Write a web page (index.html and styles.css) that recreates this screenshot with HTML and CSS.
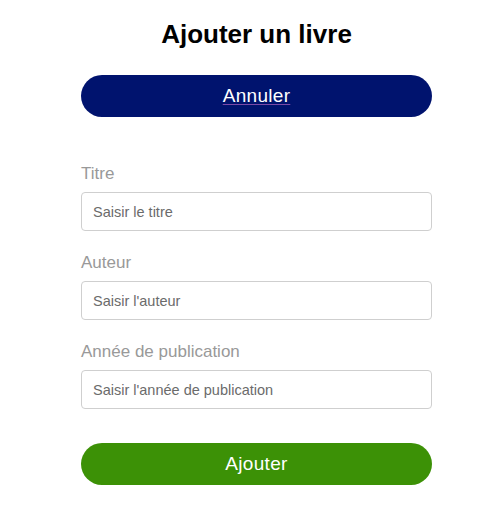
FILE: index.html
```html
<!DOCTYPE html>
<html lang="fr">
<head>
<meta charset="utf-8">
<title>Ajouter un livre</title>
<link rel="stylesheet" href="styles.css">
</head>
<body>
<main class="page">
  <h1 class="title">Ajouter un livre</h1>
  <a class="btn btn-cancel" href="#">Annuler</a>
  <form class="form">
    <div class="field">
      <label class="label" for="titre">Titre</label>
      <input class="input" id="titre" type="text" placeholder="Saisir le titre">
    </div>
    <div class="field">
      <label class="label" for="auteur">Auteur</label>
      <input class="input" id="auteur" type="text" placeholder="Saisir l'auteur">
    </div>
    <div class="field">
      <label class="label" for="annee">Année de publication</label>
      <input class="input" id="annee" type="text" placeholder="Saisir l'année de publication">
    </div>
    <button class="btn btn-add" type="button">Ajouter</button>
  </form>
</main>
</body>
</html>
```
FILE: styles.css
```css
html, body {
  margin: 0;
  background: #ffffff;
}
body {
  font-family: "Liberation Sans", Arial, sans-serif;
  padding: 19px 0 0 16px;
}
.page {
  width: 351px;
  margin: 0 auto;
  display: flex;
  flex-direction: column;
}
.title {
  margin: 0;
  font-size: 26px;
  line-height: 30px;
  font-weight: bold;
  text-align: center;
  color: #000;
}
.btn {
  display: flex;
  align-items: center;
  justify-content: center;
  height: 42px;
  border: none;
  border-radius: 21px;
  color: #fff;
  font-family: "Liberation Sans", Arial, sans-serif;
  font-size: 19px;
  letter-spacing: 0.3px;
  box-sizing: border-box;
  width: 100%;
  padding: 0;
}
.btn-cancel {
  margin-top: 26px;
  background: #00136e;
  text-decoration: underline;
  text-decoration-color: #7a4aa8;
  text-decoration-thickness: 1px;
  text-underline-offset: 2px;
}
.btn-add {
  background: #3c9106;
}
.form {
  display: flex;
  flex-direction: column;
  margin: 47px 0 0;
  gap: 22px;
}
.form .btn-add {
  margin-top: 12px;
}
.field {
  display: flex;
  flex-direction: column;
  gap: 8px;
}
.label {
  font-size: 17px;
  line-height: 20px;
  color: #999;
}
.input {
  height: 39px;
  box-sizing: border-box;
  border: 1px solid #cfcfcf;
  border-radius: 4px;
  padding: 0 11px;
  font-family: "Liberation Sans", Arial, sans-serif;
  font-size: 14.5px;
  color: #333;
  margin: 0;
  outline: none;
}
.input::placeholder {
  color: #6b6b6b;
}
```
